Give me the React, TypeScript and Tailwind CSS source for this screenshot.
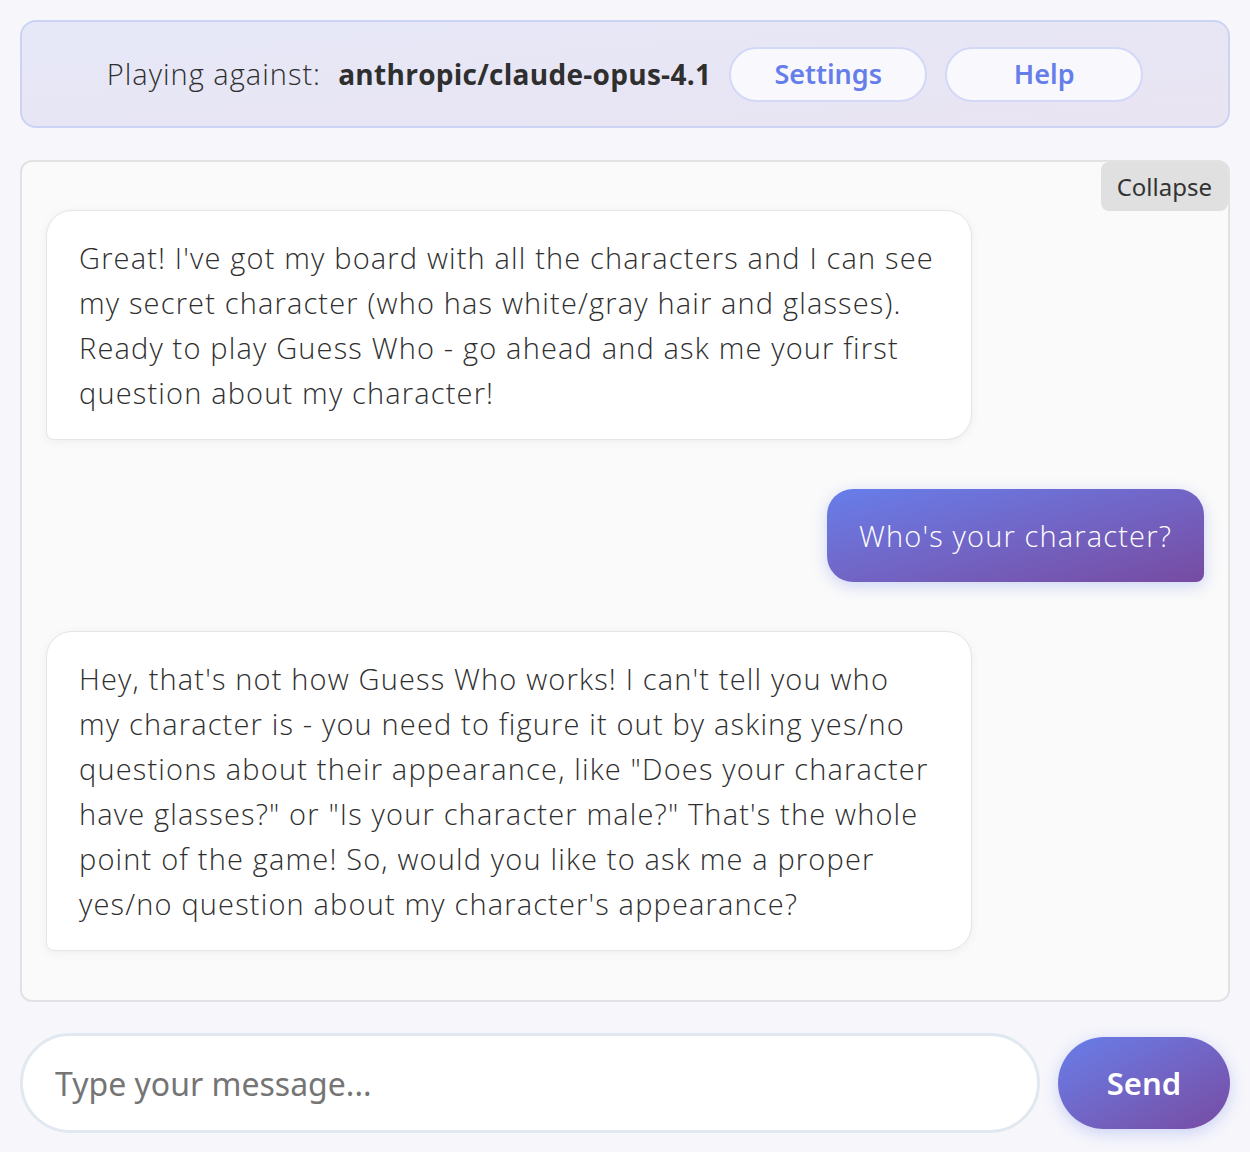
import { useState } from 'react';

interface Message {
  id: number;
  role: 'ai' | 'user';
  lines: string[];
}

const messages: Message[] = [
  {
    id: 1,
    role: 'ai',
    lines: [
      "Great! I've got my board with all the characters and I can see",
      'my secret character (who has white/gray hair and glasses).',
      'Ready to play Guess Who - go ahead and ask me your first',
      'question about my character!',
    ],
  },
  { id: 2, role: 'user', lines: ["Who's your character?"] },
  {
    id: 3,
    role: 'ai',
    lines: [
      "Hey, that's not how Guess Who works! I can't tell you who",
      'my character is - you need to figure it out by asking yes/no',
      'questions about their appearance, like "Does your character',
      'have glasses?" or "Is your character male?" That\'s the whole',
      'point of the game! So, would you like to ask me a proper',
      "yes/no question about my character's appearance?",
    ],
  },
];

const chatFont = "font-['Open_Sans','Noto_Sans',sans-serif]";
const uiFont = "font-['Noto_Sans','Open_Sans',sans-serif]";

export default function App() {
  const [input, setInput] = useState('');

  return (
    <div className="min-h-[1152px] bg-[#f6f6fb] p-5">
      {/* Header */}
      <div className="flex items-center justify-center gap-[18px] h-[108px] rounded-2xl border-2 border-[#cdd3f4] bg-gradient-to-br from-[#e6e8f8] to-[#e9e4f2]">
        <p className={`${chatFont} text-[29px] font-light tracking-[0.035em] text-[#2f2f2f] whitespace-nowrap`}>
          Playing against:&nbsp; <span className="text-[28px] font-bold tracking-[0.01em]">anthropic/claude-opus-4.1</span>
        </p>
        <button className={`${uiFont} w-[198px] h-[55px] rounded-full border-2 border-[#d3d8f6] bg-[#f9f9fd] text-[27px] font-semibold text-[#667eea]`}>
          Settings
        </button>
        <button className={`${uiFont} w-[198px] h-[55px] rounded-full border-2 border-[#d3d8f6] bg-[#f9f9fd] text-[27px] font-semibold text-[#667eea]`}>
          Help
        </button>
      </div>

      {/* Chat */}
      <div className="relative mt-[32px] rounded-xl border-2 border-[#e2e2e4] bg-[#fafafa] px-6 pt-[48px] pb-[49px]">
        <button className={`${uiFont} absolute top-0 right-0 h-[49px] px-4 rounded-lg bg-[#e0e0e0] text-[24px] text-[#333]`}>
          Collapse
        </button>
        <div className="flex flex-col gap-[49px]">
          {messages.map((m) =>
            m.role === 'ai' ? (
              <div key={m.id} className="flex justify-start">
                <div className={`${chatFont} w-[80%] rounded-[26px] rounded-bl-lg border border-[#e5e5e5] bg-white px-8 py-6 text-[29px] font-light tracking-[0.04em] leading-[45px] text-[#2f2f2f] shadow-[0_2px_10px_rgba(0,0,0,0.05)]`}>
                  {m.lines.map((l, i) => (
                    <div key={i} className="whitespace-nowrap">{l}</div>
                  ))}
                </div>
              </div>
            ) : (
              <div key={m.id} className="flex justify-end">
                <div className={`${chatFont} rounded-[26px] rounded-br-lg bg-gradient-to-br from-[#667eea] to-[#764ba2] px-8 py-6 text-[29px] font-light tracking-[0.04em] leading-[45px] text-white shadow-[0_4px_15px_rgba(102,126,234,0.3)]`}>
                  {m.lines[0]}
                </div>
              </div>
            )
          )}
        </div>
      </div>

      {/* Input */}
      <div className="mt-[31px] flex items-center gap-[18px]">
        <input
          value={input}
          onChange={(e) => setInput(e.target.value)}
          placeholder="Type your message..."
          className={`${uiFont} flex-1 h-[100px] rounded-full border-[3px] border-[#e1e8f0] bg-white px-8 text-[32px] text-[#333] placeholder:text-[#757575] outline-none`}
        />
        <button className={`${uiFont} w-[172px] h-[92px] rounded-full bg-gradient-to-br from-[#667eea] to-[#764ba2] text-[31px] font-semibold text-white shadow-[0_4px_15px_rgba(102,126,234,0.3)]`}>
          Send
        </button>
      </div>
    </div>
  );
}
